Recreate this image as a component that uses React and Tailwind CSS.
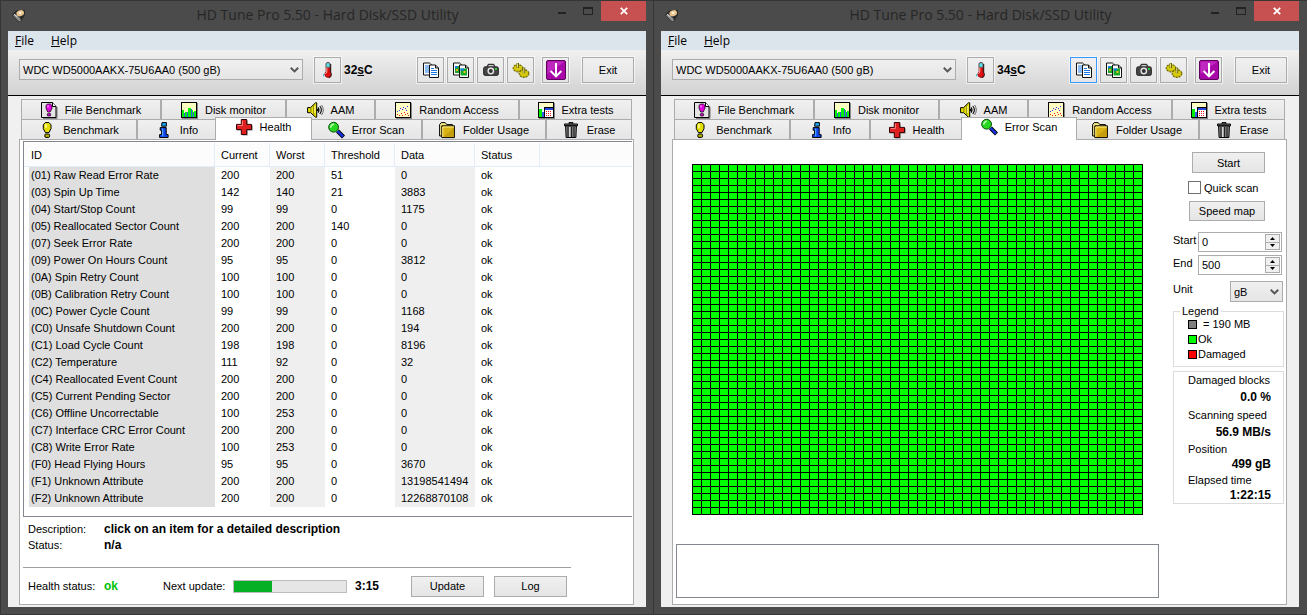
import React from "react";

const attributes = [
  ["(01) Raw Read Error Rate", "200", "200", "51", "0"],
  ["(03) Spin Up Time", "142", "140", "21", "3883"],
  ["(04) Start/Stop Count", "99", "99", "0", "1175"],
  ["(05) Reallocated Sector Count", "200", "200", "140", "0"],
  ["(07) Seek Error Rate", "200", "200", "0", "0"],
  ["(09) Power On Hours Count", "95", "95", "0", "3812"],
  ["(0A) Spin Retry Count", "100", "100", "0", "0"],
  ["(0B) Calibration Retry Count", "100", "100", "0", "0"],
  ["(0C) Power Cycle Count", "99", "99", "0", "1168"],
  ["(C0) Unsafe Shutdown Count", "200", "200", "0", "194"],
  ["(C1) Load Cycle Count", "198", "198", "0", "8196"],
  ["(C2) Temperature", "111", "92", "0", "32"],
  ["(C4) Reallocated Event Count", "200", "200", "0", "0"],
  ["(C5) Current Pending Sector", "200", "200", "0", "0"],
  ["(C6) Offline Uncorrectable", "100", "253", "0", "0"],
  ["(C7) Interface CRC Error Count", "200", "200", "0", "0"],
  ["(C8) Write Error Rate", "100", "253", "0", "0"],
  ["(F0) Head Flying Hours", "95", "95", "0", "3670"],
  ["(F1) Unknown Attribute", "200", "200", "0", "13198541494"],
  ["(F2) Unknown Attribute", "200", "200", "0", "12268870108"],
];

function Glyph({ children, crisp }) {
  return (
    <svg
      aria-hidden="true"
      viewBox="0 0 16 16"
      className="h-4 w-4 shrink-0 overflow-visible"
      shapeRendering={crisp ? "crispEdges" : "auto"}
    >
      {children}
    </svg>
  );
}

const BenchmarkIcon = () => (
  <Glyph>
    <path d="M6.3.5h3.6L12 2.8v3.8L10 10.6H6.4L4.3 6.6V2.8z" fill="#e3df00" stroke="#000" strokeWidth="1" />
    <path d="M6.3 2.3h1.5v3.5H6z" fill="#fff9a0" />
    <rect x="5.8" y="12" width="4.8" height="3.4" rx="1.2" fill="#b9b400" stroke="#000" />
  </Glyph>
);

const FileBenchmarkIcon = () => (
  <Glyph>
    <path d="M16 5v11.4H2" fill="none" stroke="#777" />
    <path d="M.5.5h11l3.5 4v11H.5z" fill="#e4e4e4" stroke="#000" />
    <path d="M11.5.5v4H15" fill="#fff" stroke="#000" />
    <path d="M6.4 2h3L11 3.6v2.6L9.2 10H6.7L5 6.2V3.6z" fill="#e000e0" stroke="#000" strokeWidth=".7" />
    <path d="M6.5 3.2h1.2v2.2H6.2z" fill="#ff9cff" />
    <rect x="6.3" y="11.4" width="3.4" height="2.6" rx="1" fill="#c800c8" stroke="#000" strokeWidth=".7" />
  </Glyph>
);

const MonitorIcon = () => (
  <Glyph crisp>
    <path d="M16 1h1v16H1v-1h15z" fill="#888" />
    <rect width="16" height="16" fill="#000" />
    <rect x="1" y="1" width="14" height="14" fill="#ffffc4" />
    <path d="M1 8h2v7H1zM4 10h2v5H4zM7 6h3v9H7zM11 8h1v7h-1zM13 9h2v6h-2z" fill="#00f400" />
    <path d="M3 11h1v4H3zM6 10h1v5H6zM10 7h1v8h-1zM12 10h1v5h-1z" fill="#3458e8" />
  </Glyph>
);

const SpeakerIcon = () => (
  <Glyph>
    <path d="M.6 5.6h3L8.5.8h1.2v14.4H8.5L3.6 10.7h-3z" fill="#e9e100" stroke="#000" />
    <path d="M3.9 5.8v4.7M6.8 3.2v9.6" stroke="#7d7700" fill="none" />
    <path d="M7.8 4v7" stroke="#fffcb0" />
    <path d="M11 5.3q2 2.7 0 5.4M12.8 4q3.2 4 0 8M10.6 7v2" fill="none" stroke="#000" strokeWidth="1.1" />
    <path d="M14.6 3q3.4 5 0 10" fill="none" stroke="#666" />
  </Glyph>
);

const RandomIcon = () => (
  <Glyph crisp>
    <path d="M16 1h1v16H1v-1h15z" fill="#888" />
    <rect width="16" height="16" fill="#000" />
    <rect x="1" y="1" width="14" height="14" fill="#ffffc4" />
    <path d="M2 9h1v1H2zM4 8h1v1H4zM5 6h1v1H5zM7 7h1v1H7zM8 5h1v1H8zM10 6h1v1h-1zM12 4h1v1h-1zM11 8h1v1h-1z" fill="#2430ff" />
    <path d="M2 12h1v1H2zM4 13h1v1H4zM6 11h1v1H6zM7 13h1v1H7zM9 10h1v1H9zM10 12h1v1h-1zM12 11h1v1h-1zM13 13h1v1h-1z" fill="#f01818" />
  </Glyph>
);

const ExtraIcon = () => (
  <Glyph crisp>
    <path d="M16 1h1v16H1v-1h15z" fill="#888" />
    <rect width="16" height="16" fill="#000" />
    <rect x="1" y="1" width="14" height="4" fill="#ffffc4" />
    <rect x="1" y="5" width="5" height="10" fill="#eef6ff" />
    <path d="M1 7h3v8H1z" fill="#00ef00" />
    <path d="M4 10h2v5H4z" fill="#3458e8" />
    <rect x="7" y="6" width="8" height="2" fill="#2546d8" />
    <rect x="7" y="8" width="8" height="7" fill="#fff" />
    <path d="M8 9h1v1H8zM10 9h1v1h-1zM12 9h1v1h-1zM8 11h1v1H8zM10 11h1v1h-1zM12 11h1v1h-1zM8 13h1v1H8zM10 13h1v1h-1zM12 13h1v1h-1z" fill="#f01818" />
  </Glyph>
);

const InfoIcon = () => (
  <Glyph>
    <path d="M6 .6h4.4v3.6H5.6z" fill="#18a8ff" stroke="#000" />
    <path d="M4.2 5.6h6v7h1.9v2.9H3.6v-2.9h2V8.2H4.2z" fill="#1048f0" stroke="#000" />
    <path d="M6.7 6.5v7.8" stroke="#60b8ff" />
  </Glyph>
);

const HealthIcon = () => (
  <Glyph>
    <path d="M6.2 1.5h5.6v4.7h5v5.4h-5v5H6.2v-5h-5V6.2h5z" fill="#999" />
    <path d="M5.3.5h5.4v4.9h4.8v5.2h-4.8v4.9H5.3v-4.9H.5V5.4h4.8z" fill="#e02020" stroke="#300" />
    <path d="M6.4 1.6v5H1.6" stroke="#ff8080" fill="none" />
  </Glyph>
);

const ScanIcon = () => (
  <Glyph>
    <path d="M9.5 9l6 6" stroke="#000" strokeWidth="4.2" />
    <path d="M9.5 9l5.5 5.6" stroke="#1830e0" strokeWidth="2.4" />
    <circle cx="5.6" cy="5.2" r="4.9" fill="#28d820" stroke="#064c06" strokeWidth="1" />
    <path d="M2.6 5.6Q3 2.4 6 2.2" fill="none" stroke="#b8ffb0" strokeWidth="1.6" />
  </Glyph>
);

const FolderIcon = () => (
  <Glyph>
    <path d="M.6 2.6 2.2.6h4L7.8 2.6h5.6V14H.6z" fill="#f5e98a" stroke="#000" />
    <path d="M2.8 5V3.8h12.6v11.8H2.8z" fill="#d9b414" stroke="#000" />
    <path d="M3.8 15V5h11" fill="none" stroke="#fff08a" />
    <path d="M4.5 14.8 14.8 6v8.8z" fill="#b88f08" opacity=".6" />
  </Glyph>
);

const TrashIcon = () => (
  <Glyph>
    <path d="M6 1.8V.6h4v1.2M1.5 2h13v1.8h-13z" fill="#777" stroke="#000" />
    <path d="M2.6 4h10.8l-.5 11.5H3.1z" fill="#8c8c8c" stroke="#000" />
    <path d="M5 5v10M11 5v10M8.6 5v10" stroke="#222" strokeWidth="1.2" />
    <path d="M6.7 5v10" stroke="#ddd" strokeWidth="1.2" />
  </Glyph>
);

const ThermometerIcon = () => (
  <Glyph>
    <path d="M10.5 2v8.4q2 3.6-1.8 5.2" fill="none" stroke="#222" strokeWidth="1.4" />
    <path d="M6 1.4Q8-.8 10 1.4v8.4q2.2 3.4-.3 5.2-2.2 1.2-4.2-.6-1.8-2.2.5-4.6z" fill="#e01010" stroke="#701010" strokeWidth=".7" />
    <path d="M6.2 1.6Q8-.2 9.8 1.6v3.6H6.2z" fill="#58e0e8" stroke="#207078" strokeWidth=".5" />
    <path d="M5.6 12q.2-1 1.2-1.8V5.6" fill="none" stroke="#ffb0b0" strokeWidth="1" />
    <path d="M3.5 12v2.5" stroke="#48d0d8" />
  </Glyph>
);

const CopyTextIcon = () => (
  <Glyph>
    <path d="M.5 1h6L9 3.4V13H.5z" fill="#fff" stroke="#111" />
    <path d="M2 4h4M2 6h5M2 8h5M2 10h5" stroke="#1878e8" />
    <path d="M6.5 3h6L15.5 6v9.5h-9z" fill="#fff" stroke="#111" />
    <path d="M12.5 3v3h3" fill="none" stroke="#111" />
    <path d="M8 6.5h3M8 8.5h6M8 10.5h6M8 12.5h6" stroke="#1878e8" />
  </Glyph>
);

const CopyImageIcon = () => (
  <Glyph>
    <path d="M.5 1h6L9 3.4V13H.5z" fill="#fff" stroke="#111" />
    <path d="M2 4h5v7H2z" fill="#18a828" />
    <path d="M2 4h2.5v2H2z" fill="#1878e8" />
    <path d="M3 7h2v2H3z" fill="#f0a020" />
    <path d="M6.5 3h6L15.5 6v9.5h-9z" fill="#fff" stroke="#111" />
    <path d="M12.5 3v3h3" fill="none" stroke="#111" />
    <path d="M7.5 6.5H14v7H7.5z" fill="#18a828" />
    <path d="M7.5 6.5H11v2H7.5z" fill="#1878e8" />
    <path d="M10.5 9h2v2h-2z" fill="#f0c020" />
  </Glyph>
);

const CameraIcon = () => (
  <Glyph>
    <path d="M4 4.6 5.5 2.4h5L12 4.6" fill="#ccc" stroke="#333" strokeWidth="1.2" />
    <rect x=".6" y="4.8" width="14.8" height="8.6" rx="1.6" fill="#444" stroke="#2c2c2c" />
    <circle cx="7.8" cy="9" r="3.4" fill="#e6e6e6" />
    <circle cx="7.8" cy="9" r="2" fill="#333" />
    <rect x="12" y="6" width="2" height="1.8" fill="#28d838" />
  </Glyph>
);

const OptionsIcon = () => (
  <Glyph>
    <ellipse cx="5" cy="6.2" rx="4.8" ry="3.6" fill="#c9bd00" stroke="#6c6500" strokeWidth="1.2" strokeDasharray="2 1" />
    <ellipse cx="5" cy="5.8" rx="3.6" ry="2.4" fill="#d8cc10" />
    <path d="M4.8 1v5" stroke="#5c5600" strokeWidth="2.4" />
    <path d="M4.6 1.4V5.6" stroke="#f6f08a" />
    <ellipse cx="11" cy="11.6" rx="4.8" ry="3.8" fill="#c9bd00" stroke="#6c6500" strokeWidth="1.2" strokeDasharray="2 1" />
    <ellipse cx="11" cy="11.2" rx="3.6" ry="2.6" fill="#d8cc10" />
    <path d="M11 5.6v5.6" stroke="#5c5600" strokeWidth="2.4" />
    <path d="M10.8 6v5" stroke="#f6f08a" />
  </Glyph>
);

const MinimizeIcon = () => (
  <svg aria-hidden="true" viewBox="0 0 20 20" className="h-5 w-5 shrink-0">
    <rect x=".5" y=".5" width="19" height="19" rx="1.5" fill="#a808a8" stroke="#5c005c" />
    <path d="M1.5 1.5h17L1.5 14z" fill="#d040d0" opacity=".6" />
    <path d="M10 3v13M4.6 11l5.4 5.4 5.4-5.4" fill="none" stroke="#fff" strokeWidth="2" />
  </svg>
);

const DriveIcon = () => (
  <svg aria-hidden="true" viewBox="0 0 14 13" className="h-[13px] w-[14px] shrink-0">
    <path d="M0 6 4 1.5 13 .8v5L9 12.5H6z" fill="#2a2a2a" />
    <path d="M1 6.3 6.5 12l2.3.2-.4-2.6L3 5z" fill="#8e8e8e" />
    <ellipse cx="8.2" cy="4.2" rx="3.9" ry="3" fill="#e8c48c" transform="rotate(-20 8.2 4.2)" />
    <ellipse cx="8.2" cy="3.8" rx="1.5" ry="1.1" fill="#fff6e4" />
    <path d="M2 5.2 5.5 8" stroke="#ddd" />
  </svg>
);

const Chevron = () => (
  <svg
    aria-hidden="true"
    viewBox="0 0 9 6"
    className="pointer-events-none absolute top-1/2 right-1 h-1.5 w-[9px] -translate-y-1/2"
  >
    <path d="M.8.8 4.5 4.4 8.2.8" fill="none" stroke="#555" strokeWidth="2" />
  </svg>
);

const tabsTop = [
  ["File Benchmark", FileBenchmarkIcon],
  ["Disk monitor", MonitorIcon],
  ["AAM", SpeakerIcon],
  ["Random Access", RandomIcon],
  ["Extra tests", ExtraIcon],
];

const tabsBottom = [
  ["Benchmark", BenchmarkIcon],
  ["Info", InfoIcon],
  ["Health", HealthIcon],
  ["Error Scan", ScanIcon],
  ["Folder Usage", FolderIcon],
  ["Erase", TrashIcon],
];

const face = "border border-[#acacac] bg-linear-to-b from-[#f0f0f0] to-[#e5e5e5]";

function Tab({ label, Icon, active }) {
  const look = active
    ? "z-10 -mx-0.5 -mt-0.5 -mb-px border-b-0 bg-white pb-1"
    : "border-b-0 bg-linear-to-b from-[#f0f0f0] to-[#e5e5e5]";
  return (
    <button
      type="button"
      role="tab"
      aria-selected={active}
      className={"flex items-center justify-center gap-2 border border-[#acacac] whitespace-nowrap " + look}
    >
      <Icon />
      {label}
    </button>
  );
}

function ToolButton({ label, focused, children }) {
  return (
    <button
      type="button"
      aria-label={label}
      className={
        "flex h-[26px] w-[27px] items-center justify-center border bg-linear-to-b from-[#f0f0f0] to-[#e5e5e5] outline outline-white/60 " +
        (focused ? "border-[#3399ff]" : "border-[#acacac]")
      }
    >
      {children}
    </button>
  );
}

function DriveWindow({ temperature, activeTab, copyFocused, edge, children }) {
  return (
    <section className={"flex min-w-0 flex-col border-t border-b border-l border-[#363636] bg-[#4b4b4b] pb-[7px] pl-[7px] " + edge}>
      <header className="flex h-[30px] items-start">
        <span className="mt-2 ml-1">
          <DriveIcon />
        </span>
        <h1 className="flex-1 pl-20 text-center font-['Open_Sans',sans-serif] text-[14px] leading-7 whitespace-nowrap text-[#262626]">
          HD Tune Pro 5.50 - Hard Disk/SSD Utility
        </h1>
        <div className="flex">
          <button type="button" aria-label="Minimize" className="flex h-5 w-[26px] items-center justify-center">
            <span className="mt-1 h-0.5 w-2 bg-[#222]" />
          </button>
          <button type="button" aria-label="Maximize" className="flex h-5 w-[26px] items-center justify-center">
            <span className="h-2 w-2.5 border border-t-2 border-[#222]" />
          </button>
          <button type="button" aria-label="Close" className="flex h-5 w-[45px] items-center justify-center bg-[#c75050]">
            <svg aria-hidden="true" viewBox="0 0 8 8" className="h-2 w-2">
              <path d="M.8.8l6.4 6.4M7.2.8.8 7.2" stroke="#fff" strokeWidth="1.8" />
            </svg>
          </button>
        </div>
      </header>

      <div className="flex flex-1 flex-col bg-[#f0f0f0]">
        <nav className="flex h-[19px] items-center gap-[17px] bg-[#dce4ec] pl-[7px] font-['Open_Sans',sans-serif] text-[12px] leading-4">
          <button type="button">
            <u>F</u>ile
          </button>
          <button type="button">
            <u>H</u>elp
          </button>
        </nav>

        <div className="flex h-[46px] items-start border-b border-black bg-linear-to-b from-[#f0f0f0] to-[#d2d2d2] pt-[7px] pr-3 pl-[11px]">
          <div className="relative mt-0.5 flex-1">
            <select
              aria-label="Drive"
              className={"h-[21px] w-full appearance-none px-[3px] outline-none " + face}
            >
              <option>WDC WD5000AAKX-75U6AA0 (500 gB)</option>
            </select>
            <Chevron />
          </div>
          <div className="ml-[11px] flex items-center gap-[3px]">
            <ToolButton label="Temperature">
              <ThermometerIcon />
            </ToolButton>
            <output className="w-[73px] text-[12px] font-bold">
              {temperature}
              <u>s</u>C
            </output>
          </div>
          <div className="flex gap-[3px]">
            <ToolButton label="Copy text" focused={copyFocused}>
              <CopyTextIcon />
            </ToolButton>
            <ToolButton label="Copy screenshot">
              <CopyImageIcon />
            </ToolButton>
            <ToolButton label="Save screenshot">
              <CameraIcon />
            </ToolButton>
            <ToolButton label="Options">
              <OptionsIcon />
            </ToolButton>
          </div>
          <div className="ml-2 flex gap-[13px]">
            <ToolButton label="Minimize to tray">
              <MinimizeIcon />
            </ToolButton>
            <button type="button" className={"h-[26px] w-[52px] outline outline-white/60 " + face}>
              Exit
            </button>
          </div>
        </div>

        <div className="flex flex-1 flex-col pt-[3px] pr-3 pb-0.5 pl-[11px]">
          <div role="tablist" className="flex flex-col pr-0.5 pl-0.5">
            <div className="grid h-5 grid-cols-[140fr_125fr_89fr_144fr_113fr]">
              {tabsTop.map(([label, Icon]) => (
                <Tab key={label} label={label} Icon={Icon} active={false} />
              ))}
            </div>
            <div className="grid h-5 grid-cols-[116fr_80fr_93fr_112fr_124fr_86fr]">
              {tabsBottom.map(([label, Icon]) => (
                <Tab key={label} label={label} Icon={Icon} active={label === activeTab} />
              ))}
            </div>
          </div>
          <div className="flex flex-1 flex-col border border-[#acacac] bg-white">{children}</div>
        </div>
      </div>
    </section>
  );
}

function HealthPage() {
  const head = "border-r border-b border-[#e2edf8] bg-[#fcfcfc] pl-1.5 text-left font-normal";
  return (
    <div className="flex flex-1 flex-col pl-[3px]">
      <div className="mt-px mr-px border-t border-b border-l border-[#828790] pt-px pb-[9px]">
        <table className="w-full table-fixed border-separate border-spacing-0">
          <colgroup>
            <col className="w-[191px]" />
            <col className="w-[55px]" />
            <col className="w-[55px]" />
            <col className="w-[70px]" />
            <col className="w-20" />
            <col className="w-[65px]" />
            <col />
          </colgroup>
          <thead>
            <tr className="h-6">
              <th className="border-r border-b border-[#e2edf8] bg-[#fcfcfc] pl-[7px] text-left font-normal">ID</th>
              <th className={head}>Current</th>
              <th className={head}>Worst</th>
              <th className={head}>Threshold</th>
              <th className={head}>Data</th>
              <th className={head}>Status</th>
              <td className="border-b border-[#e2edf8] bg-[#fcfcfc]" />
            </tr>
          </thead>
          <tbody className="leading-[17px] whitespace-nowrap">
            {attributes.map(([id, current, worst, threshold, data]) => (
              <tr key={id}>
                <td className="pl-[5px]">
                  <div className="bg-[#dfdfdf] pl-0.5">{id}</div>
                </td>
                <td className="pl-1.5">{current}</td>
                <td className="bg-[#efefef] pl-1.5">{worst}</td>
                <td className="pl-1.5">{threshold}</td>
                <td className="bg-[#efefef] pl-1.5">{data}</td>
                <td className="pl-1.5">ok</td>
                <td />
              </tr>
            ))}
          </tbody>
        </table>
      </div>

      <dl className="grid grid-cols-[76px_1fr] pt-1 pl-[5px] leading-4">
        <dt>Description:</dt>
        <dd className="text-[12px] font-bold">click on an item for a detailed description</dd>
        <dt>Status:</dt>
        <dd className="text-[12px] font-bold">n/a</dd>
      </dl>

      <div className="mt-auto mr-[62px] flex h-[37px] items-center border-t border-[#a0a0a0] pr-1 pl-[5px]">
        <span className="w-[76px]">Health status:</span>
        <output className="w-[59px] text-[12px] font-bold text-[#00c000]">ok</output>
        <span className="w-[70px]">Next update:</span>
        <div
          role="progressbar"
          aria-label="Next update"
          aria-valuenow={34}
          className="h-[13px] flex-1 border border-[#bcbcbc] bg-[#e6e6e6]"
        >
          <div className="h-full w-[34%] bg-[#06b025]" />
        </div>
        <span className="w-16 pl-2 text-[12px] font-bold">3:15</span>
        <div className="flex gap-2.5">
          <button type="button" className={"h-[21px] w-[73px] " + face}>
            Update
          </button>
          <button type="button" className={"h-[21px] w-[73px] " + face}>
            Log
          </button>
        </div>
      </div>
    </div>
  );
}

function Spinner({ id, label, value }) {
  return (
    <div className="flex h-5">
      <label htmlFor={id} className="w-[25px] leading-[17px]">
        {label}
      </label>
      <div className="flex flex-1 border border-[#acacac] bg-white p-px">
        <input id={id} type="text" defaultValue={value} className="w-full min-w-0 flex-1 pl-0.5 outline-none" />
        <div className="flex w-[15px] flex-col">
          <button
            type="button"
            aria-label={"Increase " + label}
            className="flex flex-1 items-center justify-center border border-[#acacac] bg-[#f0f0f0]"
          >
            <svg aria-hidden="true" viewBox="0 0 5 3" className="h-[3px] w-[5px]">
              <path d="M0 3 2.5 0 5 3z" />
            </svg>
          </button>
          <button
            type="button"
            aria-label={"Decrease " + label}
            className="flex flex-1 items-center justify-center border border-t-0 border-[#acacac] bg-[#f0f0f0]"
          >
            <svg aria-hidden="true" viewBox="0 0 5 3" className="h-[3px] w-[5px]">
              <path d="M0 0 2.5 3 5 0z" />
            </svg>
          </button>
        </div>
      </div>
    </div>
  );
}

function Stat({ label, value, tight }) {
  return (
    <div className={tight ? "leading-[15px]" : "leading-[17px]"}>
      <dt>{label}</dt>
      <dd className="text-right text-[12px] font-bold">{value}</dd>
    </div>
  );
}

function BlockMap() {
  return (
    <svg
      role="img"
      aria-label="Scanned blocks"
      width="451"
      height="351"
      shapeRendering="crispEdges"
      className="mt-6 shrink-0"
    >
      <defs>
        <pattern id="block" width="9" height="7" patternUnits="userSpaceOnUse">
          <rect width="9" height="7" fill="#000" />
          <rect x="1" y="1" width="8" height="6" fill="#00ff00" />
        </pattern>
      </defs>
      <rect width="451" height="351" fill="url(#block)" />
    </svg>
  );
}

function ErrorScanPage() {
  const swatch = "h-[9px] w-[9px] border border-black ";
  return (
    <div className="flex flex-1 flex-col">
      <div className="flex justify-between pr-0.5 pl-[19px]">
        <BlockMap />
        <div className="flex w-[111px] flex-col pt-3">
          <div className="flex flex-col items-end pr-[19px]">
            <button type="button" className={"h-[21px] w-[73px] " + face}>
              Start
            </button>
            <label className="mt-2 flex h-[13px] w-[77px] items-center gap-[3px] whitespace-nowrap">
              <input
                type="checkbox"
                className="h-[13px] w-[13px] shrink-0 appearance-none border border-[#707070] bg-white checked:bg-[#707070]"
              />
              Quick scan
            </label>
            <button type="button" className={"mt-[7px] h-5 w-[76px] " + face}>
              Speed map
            </button>
          </div>
          <div className="mt-[11px] flex flex-col gap-[3px] pr-0.5">
            <Spinner id="scan-start" label="Start" value="0" />
            <Spinner id="scan-end" label="End" value="500" />
          </div>
          <div className="mt-1.5 flex h-[21px] justify-between pr-px">
            <label htmlFor="unit" className="leading-[17px]">
              Unit
            </label>
            <div className="relative w-[53px]">
              <select id="unit" className={"h-full w-full appearance-none px-[3px] outline-none " + face}>
                <option>gB</option>
              </select>
              <Chevron />
            </div>
          </div>
          <fieldset className="mt-[3px] h-[62px] border border-[#dcdcdc] pl-3.5 leading-[15px]">
            <legend className="-ml-2 px-0.5 leading-3">Legend</legend>
            <div className="flex items-center gap-1.5">
              <span className={swatch + "bg-[#808080]"} />= 190 MB
            </div>
            <div className="flex items-center gap-px">
              <span className={swatch + "bg-[#00ff00]"} />
              Ok
            </div>
            <div className="flex items-center gap-px">
              <span className={swatch + "bg-[#ff0000]"} />
              Damaged
            </div>
          </fieldset>
          <dl className="mt-1 flex flex-col gap-px border border-[#dcdcdc] pr-3 pl-3.5 whitespace-nowrap">
            <Stat label="Damaged blocks" value="0.0 %" />
            <Stat label="Scanning speed" value="56.9 MB/s" />
            <Stat label="Position" value="499 gB" tight />
            <Stat label="Elapsed time" value="1:22:15" tight />
          </dl>
        </div>
      </div>
      <textarea
        aria-label="Scan log"
        readOnly
        className="mt-auto mr-[127px] mb-1.5 ml-[3px] h-[54px] resize-none border border-[#828790] bg-white outline-none"
      />
    </div>
  );
}

export default function App() {
  return (
    <main className="grid min-h-screen grid-cols-[minmax(0,653fr)_minmax(0,654fr)] bg-[#4b4b4b] font-['Liberation_Sans',Arial,sans-serif] text-[11px] leading-4 text-black">
      <DriveWindow temperature="32" activeTab="Health" copyFocused={false} edge="pr-[7px]">
        <HealthPage />
      </DriveWindow>
      <DriveWindow temperature="34" activeTab="Error Scan" copyFocused edge="pr-2">
        <ErrorScanPage />
      </DriveWindow>
    </main>
  );
}
